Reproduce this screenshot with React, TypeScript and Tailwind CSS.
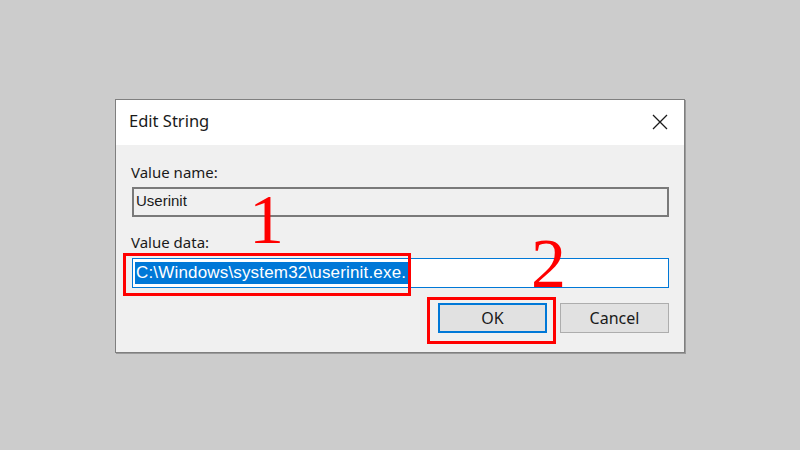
import React from "react";

const CloseIcon = () => (
  <svg width="16" height="16" viewBox="0 0 16 16" fill="none" stroke="#1a1a1a" strokeWidth={1.3}>
    <path d="M1 1 L15 15 M15 1 L1 15" />
  </svg>
);

export default function App() {
  return (
    <div className="w-[800px] h-[450px] bg-[#cccccc] flex items-center justify-center pt-[1px]">
      <div
        className="relative w-[570px] h-[254px] border border-[#7f7f7f] bg-[#f0f0f0] flex flex-col shadow-[1px_1px_0_#9a9a9a]"
        style={{ fontFamily: '"Noto Sans", "Open Sans", sans-serif' }}
      >
        {/* title bar */}
        <div className="h-[45px] bg-white flex items-center justify-between pl-[13px] pr-[16px]">
          <span className="text-[16.5px] text-[#1a1a1a] pb-[1px]">Edit String</span>
          <CloseIcon />
        </div>

        {/* body */}
        <div className="flex flex-col px-[15px] pt-[17px]">
          <label className="text-[15px] leading-[20px] text-[#1a1a1a]">Value name:</label>
          <div className="mt-[5px] ml-[1px] h-[30px] border-2 border-[#7a7a7a] bg-[#f0f0f0] flex items-center px-[2px]">
            <span
              className="text-[15px] text-[#1a1a1a]"
              style={{ fontFamily: '"Liberation Sans", Arial, sans-serif' }}
            >
              Userinit
            </span>
          </div>

          <label className="mt-[15px] text-[15px] leading-[20px] text-[#1a1a1a]">Value data:</label>
          <div className="mt-[6px] ml-[1px] h-[30px] border border-[#0078d7] bg-white flex items-center px-[2px]">
            <span
              className="bg-[#0078d7] text-white text-[17px] tracking-[0.01em] leading-[22px] pl-[1px] pr-[2px]"
              style={{ fontFamily: '"Liberation Sans", Arial, sans-serif' }}
            >
              C:\Windows\system32\userinit.exe.
            </span>
            <span className="w-[1px] h-[20px] bg-[#e07020]" />
          </div>

          <div className="mt-[15px] flex justify-end gap-[13px]">
            <button className="w-[109px] h-[30px] border-2 border-[#0078d7] bg-[#e1e1e1] text-[16px] text-[#1a1a1a]">
              OK
            </button>
            <button className="w-[109px] h-[30px] border border-[#adadad] bg-[#e1e1e1] text-[16px] text-[#1a1a1a]">
              Cancel
            </button>
          </div>
        </div>

        {/* annotations */}
        <div className="absolute left-[7px] top-[153px] w-[288px] h-[43px] border-[3px] border-[#ff0000]" />
        <div className="absolute left-[311px] top-[197px] w-[129px] h-[47px] border-[3px] border-[#ff0000]" />
        <span
          className="absolute left-[133px] top-[85px] text-[70px] leading-[70px] text-[#ff0000]"
          style={{ fontFamily: '"Liberation Serif", "Times New Roman", serif' }}
        >
          1
        </span>
        <span
          className="absolute left-[415px] top-[129px] text-[70px] leading-[70px] text-[#ff0000]"
          style={{ fontFamily: '"Liberation Serif", "Times New Roman", serif' }}
        >
          2
        </span>
      </div>
    </div>
  );
}
